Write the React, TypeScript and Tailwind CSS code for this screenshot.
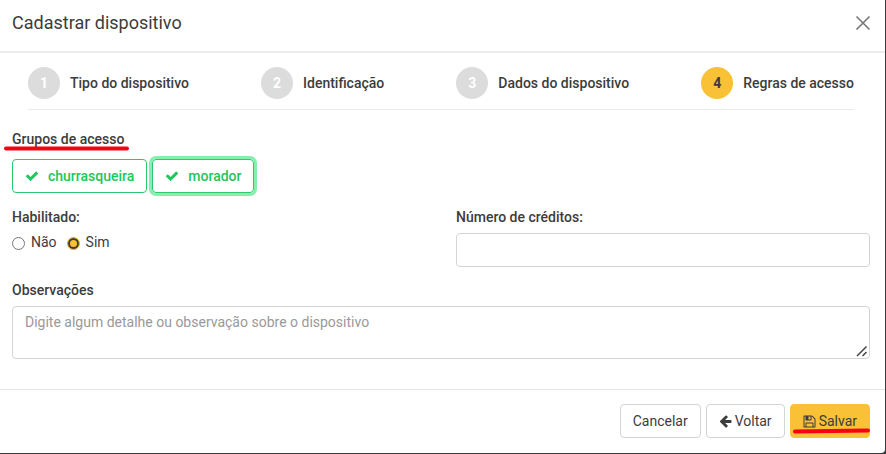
import React, { FC, useState } from "react";
import clsx from "clsx";

const steps = [
  "Tipo do dispositivo",
  "Identificação",
  "Dados do dispositivo",
  "Regras de acesso",
];

const groups = ["churrasqueira", "morador"];

const Icons = {
  check: (
    <svg viewBox="0 0 1792 1792" className="w-[14px] h-[14px]" fill="currentColor">
      <path d="M1671 566q0 40-28 68l-724 724-136 136q-28 28-68 28t-68-28l-136-136-362-362q-28-28-28-68t28-68l136-136q28-28 68-28t68 28l294 295 656-657q28-28 68-28t68 28l136 136q28 28 28 68z" />
    </svg>
  ),
  arrowLeft: (
    <svg viewBox="64 0 1664 1792" className="w-[13px] h-[14px]" fill="currentColor">
      <path d="M1664 896v128q0 53-32.5 90.5t-84.5 37.5h-704l293 294q38 36 38 90t-38 90l-75 76q-37 37-90 37-52 0-91-37l-651-652q-37-37-37-90 0-52 37-91l651-650q38-38 91-38 52 0 90 38l75 74q38 38 38 91t-38 91l-293 293h704q52 0 84.500 37.500t32.500 90.500z" />
    </svg>
  ),
  save: (
    <svg viewBox="64 64 1664 1664" className="w-[13px] h-[13px]" fill="currentColor">
      <path d="M512 1536h768v-384h-768v384zm896 0h128v-896q0-14-10-38.500t-20-34.500l-281-281q-10-10-34-20t-39-10v416q0 40-28 68t-68 28h-576q-40 0-68-28t-28-68v-416h-128v1280h128v-416q0-40 28-68t68-28h832q40 0 68 28t28 68v416zm-384-928v-320q0-13-9.500-22.500t-22.500-9.500h-192q-13 0-22.500 9.500t-9.500 22.500v320q0 13 9.500 22.500t22.500 9.500h192q13 0 22.500-9.500t9.500-22.500zm640 32v928q0 40-28 68t-68 28h-1344q-40 0-68-28t-28-68v-1344q0-40 28-68t68-28h928q40 0 88 20t76 48l280 280q28 28 48 76t20 88z" />
    </svg>
  ),
  close: (
    <svg viewBox="0 0 16 16" className="w-4 h-4" fill="none" stroke="currentColor" strokeWidth="1.6">
      <path d="M1.500 1.500l13 13M14.500 1.500l-13 13" />
    </svg>
  ),
};

const App: FC = () => {
  const [focused, setFocused] = useState("morador");
  const [enabled, setEnabled] = useState("Sim");

  return (
    <div className="bg-[#3a3b3d] pr-px pb-px font-[Roboto,sans-serif] text-sm leading-5 text-[#3c3c3c]">
      <div className="bg-white rounded-br-sm">
        <header className="flex items-center justify-between h-[53px] pl-3 pr-3.5 pb-1.5 border-b-2 border-[#ededed]">
          <h1 className="text-lg font-normal">Cadastrar dispositivo</h1>
          <button type="button" aria-label="Fechar" className="text-[#777]">
            {Icons.close}
          </button>
        </header>

        <main className="pl-3 pr-[15px] pb-[30px]">
          <ol className="flex items-center justify-between mx-4 pt-3.5 pb-2.5 border-b border-[#e9e9e9]">
            {steps.map((step, i) => (
              <li key={step} className="flex items-center gap-2.5 font-medium">
                <span
                  className={clsx(
                    "flex items-center justify-center w-8 h-8 rounded-full font-bold",
                    i === 3 ? "bg-[#f8c136]" : "bg-[#dcdcdc] text-white"
                  )}
                >
                  {i + 1}
                </span>
                {step}
              </li>
            ))}
          </ol>

          <div className="relative mt-[19px] w-max font-medium">
            Grupos de acesso
            <svg
              viewBox="0 0 125 5"
              className="absolute -left-2 top-[17px] w-[125px] h-[5px]"
              fill="none"
              stroke="#f80012"
              strokeWidth="4"
              strokeLinecap="round"
            >
              <path d="M2 2.500h121" />
            </svg>
          </div>

          <div className="flex gap-[5px] mt-2.5">
            {groups.map((group) => (
              <button
                key={group}
                type="button"
                onClick={() => setFocused(group)}
                className={clsx(
                  "flex items-center gap-[9px] h-[34px] px-3 rounded-sm border border-[#2dc76d] font-medium text-[#22c55e]",
                  focused === group && "ring-3 ring-[#86efac]"
                )}
              >
                {Icons.check}
                {group}
              </button>
            ))}
          </div>

          <div className="grid grid-cols-2 gap-[30px] mt-3.5">
            <fieldset>
              <legend className="font-medium">Habilitado:</legend>
              <div className="flex items-center gap-2.5 mt-[5px]">
                {["Não", "Sim"].map((option) => (
                  <label key={option} className="flex items-center gap-1.5">
                    <input
                      type="radio"
                      name="habilitado"
                      checked={enabled === option}
                      onChange={() => setEnabled(option)}
                      className="appearance-none w-[13px] h-[13px] mt-0.5 rounded-full border border-[#767676] bg-white checked:border-[#d9a62c] checked:bg-[#f8c136] checked:inset-ring-2 checked:inset-ring-[#3c3c3c]"
                    />
                    {option}
                  </label>
                ))}
              </div>
            </fieldset>
            <div>
              <label htmlFor="creditos" className="block font-medium">
                Número de créditos:
              </label>
              <input
                id="creditos"
                type="text"
                className="block w-full h-[34px] mt-1.5 px-3 rounded-sm border border-[#d4d4d4]"
              />
            </div>
          </div>

          <label htmlFor="observacoes" className="block mt-[13px] font-medium">
            Observações
          </label>
          <div className="relative mt-1.5">
            <textarea
              id="observacoes"
              placeholder="Digite algum detalhe ou observação sobre o dispositivo"
              className="block w-full h-[53px] px-3 py-[5px] rounded-sm border border-[#d4d4d4] placeholder:text-[#999]"
            />
            <svg
              viewBox="0 0 12 12"
              className="absolute right-0.5 bottom-0.5 w-3 h-3 bg-white pointer-events-none"
              fill="none"
              stroke="#444"
              strokeWidth="1.5"
            >
              <path d="M1 11L10.500 1.500M6.500 11L10.500 7" />
            </svg>
          </div>
        </main>

        <footer className="flex justify-end gap-[5px] px-[15px] pt-3.5 pb-[15px] border-t border-[#e5e5e5]">
          <button type="button" className="h-[34px] px-3 rounded-sm border border-[#d4d4d4]">
            Cancelar
          </button>
          <button
            type="button"
            className="flex items-center gap-[3px] h-[34px] px-3 rounded-sm border border-[#d4d4d4]"
          >
            {Icons.arrowLeft}
            Voltar
          </button>
          <button
            type="button"
            className="relative flex items-center gap-[3px] h-[34px] px-3 rounded-sm border border-[#f8c136] bg-[#f8c136]"
          >
            {Icons.save}
            Salvar
            <svg
              viewBox="0 0 78 6"
              className="absolute left-px bottom-[3px] w-[78px] h-1.5"
              fill="none"
              stroke="#f80012"
              strokeWidth="4"
              strokeLinecap="round"
            >
              <path d="M3 3.500L76 2.500" />
            </svg>
          </button>
        </footer>
      </div>
    </div>
  );
};

export default App;
